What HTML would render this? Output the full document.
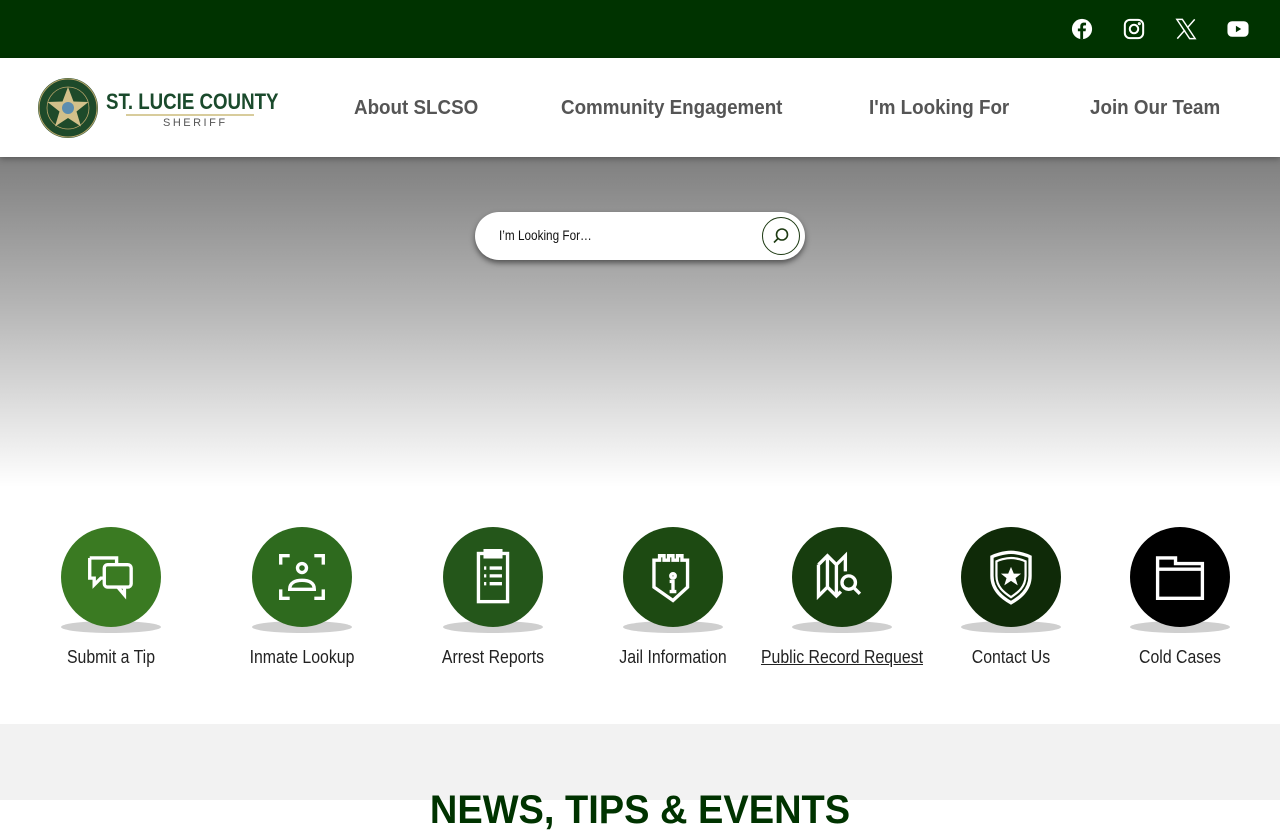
<!DOCTYPE html>
<html><head><meta charset="utf-8"><style>
*{margin:0;padding:0;box-sizing:border-box}
body{width:1280px;height:800px;overflow:hidden;font-family:"Liberation Sans",sans-serif;background:#fff;position:relative}
.top{height:58px;background:#003300;position:relative}
.top svg{position:absolute;top:18px}
.hdr{height:99px;background:#fff;position:relative;box-shadow:0 2px 6px rgba(0,0,0,.3);z-index:2}
.nav{position:absolute;top:97px;font-size:20px;font-weight:bold;color:#555;white-space:nowrap;transform:scaleX(.94);transform-origin:left;z-index:3}
.hero{position:absolute;top:157px;left:0;width:1280px;height:330px;background:linear-gradient(#7f7f7f,#b5b5b5 45%,#fff 100%)}
.search{position:absolute;left:475px;top:212px;width:330px;height:48px;border-radius:24px;background:#fff;box-shadow:0 3px 6px rgba(0,0,0,.5)}
.search span{position:absolute;left:24px;top:15px;font-size:14px;color:#111;transform:scaleX(.84);transform-origin:left;white-space:nowrap}
.sbtn{position:absolute;right:5px;top:5px;width:38px;height:38px;border-radius:50%;border:1px solid #1d3a12}
.item{position:absolute;top:527px;width:160px;text-align:center}
.circ{width:100px;height:100px;border-radius:50%;margin:0 auto;position:relative;z-index:1}
.circ svg{position:absolute;left:22px;top:22px}
.sh{width:100px;height:12px;border-radius:50%;background:#cfcfcf;margin:-6px auto 0}
.lbl{margin:14px -60px 0;font-size:18px;color:#222;white-space:nowrap;transform:scaleX(.88)}
.gray{position:absolute;top:724px;left:0;width:1280px;height:76px;background:#f2f2f2}
.news{position:absolute;top:788px;left:0;width:1280px;text-align:center;font-size:40px;font-weight:bold;color:#003300;transform:scaleX(.95)}
</style></head><body>
<div class="top">
<svg style="left:1071px" width="22" height="22" viewBox="0 0 24 24"><circle cx="12" cy="12" r="11" fill="#fff"/><path d="M13.2 23V14.5h2.7l.4-3.1h-3.1V9.5c0-.9.3-1.5 1.6-1.5h1.6V5.2c-.3 0-1.3-.1-2.4-.1-2.3 0-3.9 1.4-3.9 4V11.4H7.5v3.1h2.6V23z" fill="#003300"/></svg>
<svg style="left:1123px" width="22" height="22" viewBox="0 0 24 24" fill="none" stroke="#fff" stroke-width="2.2"><rect x="2" y="2" width="20" height="20" rx="5.5"/><circle cx="12" cy="12" r="4.6"/><circle cx="17.8" cy="6.2" r=".6" fill="#fff"/></svg>
<svg style="left:1175px" width="22" height="22" viewBox="0 0 24 24" fill="none" stroke="#fff" stroke-width="1.6"><path d="M2 1.5h6l14 21h-6z"/><path d="M21.5 1.5 13.5 10.6M2.5 22.5l8.3-9.4"/></svg>
<svg style="left:1227px" width="22" height="22" viewBox="0 0 24 24"><rect x="0.5" y="3.5" width="23" height="17" rx="5" fill="#fff"/><path d="M9.7 8.5v7l5.8-3.5z" fill="#003300"/></svg>
</div>
<div class="hdr">
<svg style="position:absolute;left:37px;top:19px" width="62" height="62" viewBox="0 0 62 62"><circle cx="31" cy="31" r="30" fill="#1e4a2a"/><circle cx="31" cy="31" r="29" fill="none" stroke="#b9a56a" stroke-width="1"/><circle cx="31" cy="31" r="21" fill="none" stroke="#b9a56a" stroke-width=".8"/><path d="M31 10l5.5 14.5 15 .5-12 9.5 4.5 15L31 41l-13 8.5 4.5-15-12-9.5 15-.5z" fill="#d2c08a"/><circle cx="31" cy="31" r="6" fill="#5b8db0"/></svg>
<div style="position:absolute;left:106px;top:31px;font-size:22px;font-weight:bold;color:#1a4a2c;white-space:nowrap;transform:scaleX(.85);transform-origin:left">ST. LUCIE COUNTY</div>
<div style="position:absolute;left:126px;top:56px;width:128px;height:2px;background:#d8cc9c"></div>
<div style="position:absolute;left:163px;top:59px;font-size:11px;color:#555;letter-spacing:2.5px">SHERIFF</div>
</div>
<div class="nav" style="left:354px">About SLCSO</div>
<div class="nav" style="left:561px">Community Engagement</div>
<div class="nav" style="left:869px">I'm Looking For</div>
<div class="nav" style="left:1090px">Join Our Team</div>
<div class="hero"></div>
<div class="search"><span>I’m Looking For…</span><div class="sbtn"><svg width="38" height="38" viewBox="0 0 38 38" fill="none" stroke="#1d3a12" stroke-width="1.6" style="position:absolute;left:-1px;top:-1px"><circle cx="20" cy="17.5" r="5.5"/><path d="M16 21.5l-4 4"/></svg></div></div>

<div class="item" style="left:31px"><div class="circ" style="background:#3a7a22"><svg width="56" height="56" viewBox="0 0 50 50" fill="none" stroke="#fff" stroke-width="3"><path d="M6 8h24v6M6 8v18h4v6l6-6h3"/><rect x="19" y="14" width="24" height="20" rx="3"/><path d="M37 34v7l-6-7"/></svg></div><div class="sh"></div><div class="lbl">Submit a Tip</div></div>
<div class="item" style="left:222px"><div class="circ" style="background:#2e6a1e"><svg width="56" height="56" viewBox="0 0 50 50" fill="none" stroke="#fff" stroke-width="3"><path d="M6 14V6h8M36 6h8v8M6 36v8h8M36 44h8v-8"/><circle cx="25" cy="17" r="4"/><path d="M14 36c0-6 5-8 11-8s11 2 11 8z"/></svg></div><div class="sh"></div><div class="lbl">Inmate Lookup</div></div>
<div class="item" style="left:413px"><div class="circ" style="background:#24561a"><svg width="56" height="56" viewBox="0 0 50 50" fill="none" stroke="#fff" stroke-width="3"><rect x="12" y="4" width="26" height="43"/><rect x="18" y="1" width="14" height="6" fill="#fff"/><path d="M17 17h2M17 24h2M17 31h2M22 17h11M22 24h11M22 31h11"/></svg></div><div class="sh"></div><div class="lbl">Arrest Reports</div></div>
<div class="item" style="left:593px"><div class="circ" style="background:#1d4a12"><svg width="56" height="56" viewBox="0 0 50 50" fill="none" stroke="#fff" stroke-width="3"><path d="M8 10h5V6h4v4h4V6h4v4h4V6h4v4h5v24L25 46 8 34z"/><circle cx="25" cy="24" r="2"/><path d="M22 29h3v9h-3M22 38h6"/></svg></div><div class="sh"></div><div class="lbl">Jail Information</div></div>
<div class="item" style="left:762px"><div class="circ" style="background:#173d0e"><svg width="56" height="56" viewBox="0 0 50 50" fill="none" stroke="#fff" stroke-width="3"><path d="M4 14l8-8 8 8 8-8v14M4 14v28l8-8 8 8 4-4M12 6v28M20 14v28"/><circle cx="31" cy="30" r="6"/><path d="M35 34l6 6"/></svg></div><div class="sh"></div><div class="lbl" style="text-decoration:underline">Public Record Request</div></div>
<div class="item" style="left:931px"><div class="circ" style="background:#0f2a08"><svg width="56" height="56" viewBox="0 0 50 50" fill="none" stroke="#fff" stroke-width="3"><path d="M25 3c7 0 15 3 17 4v17c0 13-10 20-17 24C18 44 8 37 8 24V7c2-1 10-4 17-4z"/><path d="M25 8c5 0 11 2 13 3v13c0 10-7 15-13 19-6-4-13-9-13-19V11c2-1 8-3 13-3z" stroke-width="2"/><path d="M25 16l2.5 6h6.5l-5 4 2 6.5-6-4-6 4 2-6.5-5-4h6.5z" fill="#fff" stroke="none"/></svg></div><div class="sh"></div><div class="lbl">Contact Us</div></div>
<div class="item" style="left:1100px"><div class="circ" style="background:#000"><svg width="56" height="56" viewBox="0 0 50 50" fill="none" stroke="#fff" stroke-width="3"><path d="M5 8h16v5h24v31H5z"/><path d="M5 18h40"/></svg></div><div class="sh"></div><div class="lbl">Cold Cases</div></div>

<div class="gray"></div>
<div class="news">NEWS, TIPS &amp; EVENTS</div>
</body></html>
